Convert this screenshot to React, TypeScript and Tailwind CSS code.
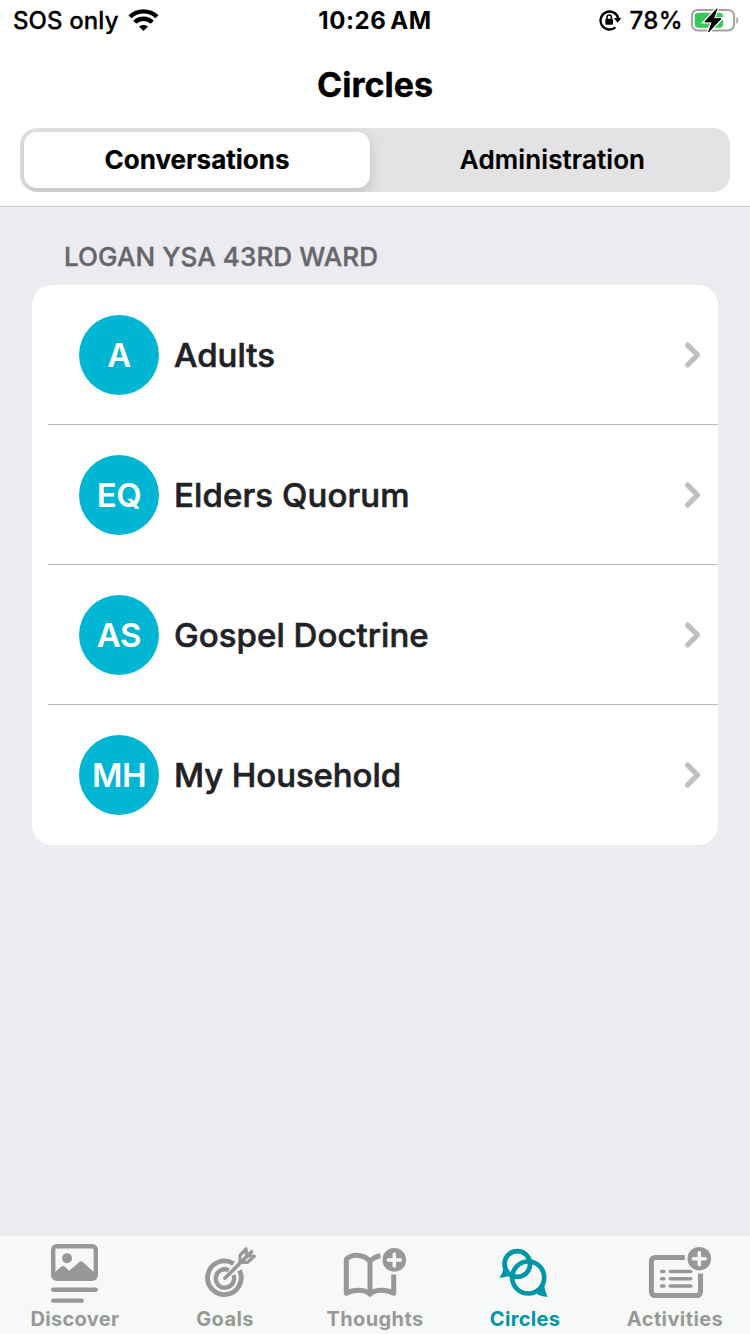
import type { ReactNode } from "react";

const circles = [
  { initials: "A", name: "Adults", spacing: "tracking-[0px]" },
  { initials: "EQ", name: "Elders Quorum", spacing: "tracking-[0.1px]" },
  { initials: "AS", name: "Gospel Doctrine", spacing: "tracking-[0.05px]" },
  { initials: "MH", name: "My Household", spacing: "tracking-[-0.1px]" },
];

function Wifi() {
  return (
    <svg className="ml-[9px] h-[24px] w-[32px]" viewBox="0 0 32 24" fill="none" stroke="black" strokeWidth="4.4">
      <path d="M2 8.8C9.3 1.6 21.7 1.6 29 8.8" />
      <path d="M6.8 14.2C11.5 9.6 19.5 9.6 24.2 14.2" />
      <path d="M15.5 23l-4.6-4.4c2.6-2.3 6.6-2.3 9.2 0z" fill="black" stroke="none" />
    </svg>
  );
}

function RotationLock() {
  return (
    <svg className="h-[22px] w-[24px]" viewBox="0 0 24 22" fill="none" stroke="black" strokeWidth="2.4">
      <path d="M16.4 18.4A9 9 0 1 1 19.2 9" />
      <path d="M14.8 9h7.6l-3.8 4.8z" fill="black" stroke="none" />
      <rect x="6.4" y="9.7" width="7.6" height="6" rx="1" fill="black" stroke="none" />
      <path d="M8 10V8.2a2.2 2.2 0 0 1 4.4 0V10" strokeWidth="1.5" />
    </svg>
  );
}

function Battery() {
  return (
    <svg className="h-[26px] w-[50px]" viewBox="0 0 50 26">
      <rect x="1.9" y="2.9" width="42.2" height="20.6" rx="6" fill="none" stroke="#a2a2a2" strokeWidth="2" />
      <path d="M46.3 9.9c2.7 1.2 2.7 5.6 0 6.8z" fill="#a2a2a2" />
      <rect x="4.7" y="5.7" width="28.3" height="15" rx="3.6" fill="#34c759" />
      <path d="M27 1.7L14.8 14.9h7.4l-3.6 10L31 11.7h-7.5z" fill="black" stroke="white" strokeWidth="3.4" paintOrder="stroke" />
      <path d="M27 1.7L14.8 14.9h7.4l-3.6 10L31 11.7h-7.5z" fill="black" stroke="black" strokeWidth="1" strokeLinejoin="round" />
    </svg>
  );
}

function Plus({ x, y }: { x: number; y: number }) {
  return (
    <>
      <circle cx={x} cy={y} r="11.8" fill="currentColor" stroke="none" />
      <path d={`M${x - 6} ${y}h12M${x} ${y - 6}v12`} stroke="#f7f9f8" strokeWidth="3.5" strokeLinecap="round" />
    </>
  );
}

const tabs: { label: string; active?: boolean; icon: ReactNode; spacing: string }[] = [
  {
    label: "Discover",
    spacing: "tracking-[0.3px]",
    icon: (
      <>
        <rect x="53.2" y="10.2" width="42.6" height="32.6" rx="3.5" strokeWidth="4.4" />
        <path d="M54 36.8l7.2-6.1q1.8-1.4 3.6 0l4.5 4 9.7-8.5q2-1.7 4 0L95 37v7H54z" fill="currentColor" stroke="none" />
        <circle cx="67" cy="22.2" r="5" fill="currentColor" stroke="none" />
        <path d="M53.2 53.8h42.6M53.2 64.6h28.6" strokeLinecap="round" strokeWidth="4.4" />
      </>
    ),
  },
  {
    label: "Goals",
    spacing: "tracking-[0.4px]",
    icon: (
      <>
        <path d="M83.6 27.7A16.8 16.8 0 1 0 89.5 34.4" strokeWidth="4.8" />
        <path d="M78.8 34.2A9.2 9.2 0 1 0 83.4 39" strokeWidth="4.4" />
        <path d="M74.9 42.3L101.5 15.7" strokeWidth="3.6" strokeLinecap="round" />
        <path d="M90 26.3v-7l6-6.5.6 7.2M90 26.3h7.6l6.7-6-7.4-.7" strokeWidth="3.2" strokeLinejoin="round" strokeLinecap="round" />
      </>
    ),
  },
  {
    label: "Thoughts",
    spacing: "tracking-[0.4px]",
    icon: (
      <>
        <path d="M80.4 19.7C76 20.4 72.4 22.5 70 25.4 64.5 18.1 52 17.5 46.3 23.3V57.2C53 53.5 64.5 52.6 70 58.2 75.5 52.6 87 53.5 93.7 57.2V38.6M70 25V58" strokeWidth="5" strokeLinejoin="round" />
        <Plus x={94.3} y={23.9} />
      </>
    ),
  },
  {
    label: "Circles",
    spacing: "tracking-[0.3px]",
    active: true,
    icon: (
      <>
        <circle cx="67.3" cy="28" r="12.8" strokeWidth="4.7" />
        <circle cx="78.2" cy="41.5" r="16" strokeWidth="4.7" />
        <path d="M53.3 32.5Q52.8 37.5 49.3 41.8 55 41.8 61.5 38.8L57 32zM94.3 49.5Q94.5 55.5 97.8 60.9 90.5 60.8 84.5 56.5L89 51z" fill="currentColor" stroke="none" />
      </>
    ),
  },
  {
    label: "Activities",
    spacing: "tracking-[0.4px]",
    icon: (
      <>
        <path d="M84.8 21.5H55.5Q51.4 21.5 51.4 25.6V55.4Q51.4 59.5 55.5 59.5H96.4Q100.5 59.5 100.5 55.4V37.6" strokeWidth="5" />
        <path d="M61.6 35.4h2.4M70.2 35.4h20.6M61.6 42.7h2.4M70.2 42.7h20.6M61.6 50h2.4M70.2 50h20.6" strokeWidth="3.5" strokeLinecap="round" />
        <Plus x={99.3} y={22.7} />
      </>
    ),
  },
];

export default function App() {
  return (
    <div className="flex h-[1334px] w-[750px] flex-col overflow-hidden bg-[#ebebf0] font-['Inter',sans-serif] text-black">
      <header className="flex h-[207px] shrink-0 flex-col border-b border-[#c4c4c8] bg-white">
        <div className="grid h-[40px] grid-cols-3 text-[24px] leading-[38px]">
          <div className="flex items-center pl-[13px]">
            <span className="pt-[2px] font-medium tracking-[0.1px] [-webkit-text-stroke:0.3px_black]">SOS only</span>
            <Wifi />
          </div>
          <div className="pt-[2px] text-center font-bold tracking-[0.6px] [word-spacing:-2.5px]">10:26 AM</div>
          <div className="flex items-center justify-end pr-[10px]">
            <RotationLock />
            <span className="mr-[7px] ml-[6px] pt-[2px] font-medium tracking-[0.4px] [-webkit-text-stroke:0.3px_black]">78%</span>
            <Battery />
          </div>
        </div>
        <h1 className="h-[88px] text-center text-[34px] leading-[89px] font-bold tracking-[0px] [-webkit-text-stroke:0.4px_black]">Circles</h1>
        <div className="mx-[20px] flex h-[64px] overflow-hidden rounded-[17px] bg-[#e3e3e5] p-[4px] text-[26px] leading-[56px]">
          <div className="w-[346px] rounded-[13px] bg-white text-center font-bold tracking-[0px] shadow-[0_5px_14px_rgba(0,0,0,0.16)] [-webkit-text-stroke:0.2px_black]">Conversations</div>
          <div className="flex-1 pl-[9px] text-center font-semibold tracking-[0.1px] [-webkit-text-stroke:0.2px_black]">Administration</div>
        </div>
      </header>

      <main className="flex-1 px-[32px]">
        <h2 className="h-[78px] pt-[30px] pl-[32px] text-[26px] leading-[40px] font-medium tracking-[0.1px] text-[#66666b] [-webkit-text-stroke:0.4px_#66666b]">LOGAN YSA 43RD WARD</h2>
        <div className="h-[560px] rounded-[20px] bg-white">
          {circles.map((circle, i) => (
            <div key={circle.name} className={`ml-[16px] flex h-[140px] items-center border-b pr-[16px] pl-[31px] ${i < 3 ? "border-[#b6b6b8]" : "border-transparent"}`}>
              <div className="flex h-[80px] w-[80px] items-center justify-center rounded-full bg-[#00b6d3] pt-[3px] text-[33px] font-semibold tracking-[-0.4px] text-white">{circle.initials}</div>
              <span className={`ml-[15px] pt-[3px] text-[33px] font-medium text-[#212225] [-webkit-text-stroke:0.6px_#212225] ${circle.spacing}`}>{circle.name}</span>
              <svg className="ml-auto h-[28px] w-[20px]" viewBox="0 0 20 28" fill="none" stroke="#bfbfbf" strokeWidth="5.2" strokeLinecap="round" strokeLinejoin="round">
                <path d="M5.6 4.1L15.6 14 5.6 23.9" />
              </svg>
            </div>
          ))}
        </div>
      </main>

      <nav className="grid h-[98px] shrink-0 grid-cols-5 bg-[#f7f9f8]">
        {tabs.map((tab) => (
          <div key={tab.label} className={`flex flex-col ${tab.active ? "text-[#0095a8]" : "text-[#979997]"}`}>
            <svg className="h-[70px] w-[150px]" viewBox="0 0 150 70" fill="none" stroke="currentColor">{tab.icon}</svg>
            <span className={`text-center text-[20px] leading-[26px] font-bold ${tab.spacing}`}>{tab.label}</span>
          </div>
        ))}
      </nav>
    </div>
  );
}
